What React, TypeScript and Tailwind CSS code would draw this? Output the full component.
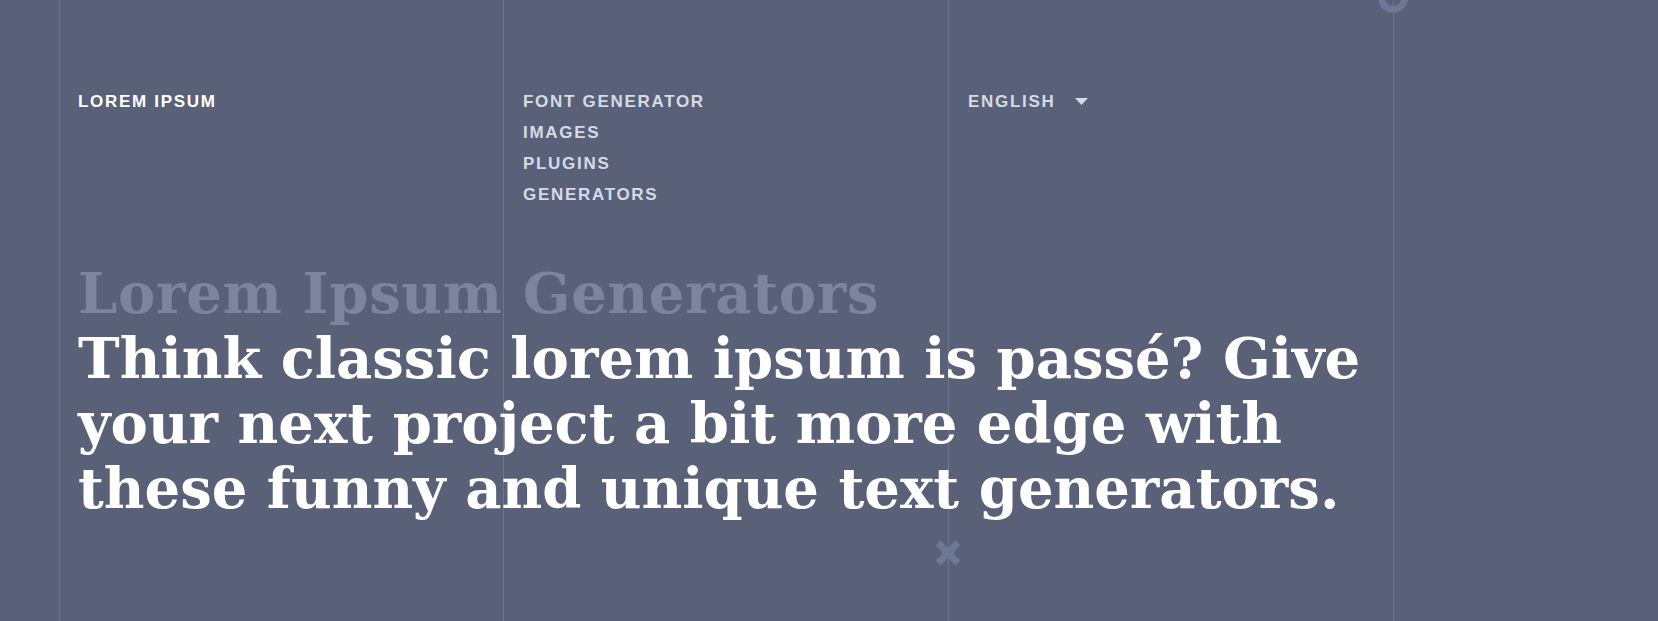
import { Fragment } from "react"

const navLinks = ["FONT GENERATOR", "IMAGES", "PLUGINS", "GENERATORS"]

const heroLines = [
  "Think classic lorem ipsum is passé? Give",
  "your next project a bit more edge with",
  "these funny and unique text generators.",
]

export default function App() {
  return (
    <div className="relative h-[621px] overflow-hidden bg-[#596178] font-['Liberation_Sans',Arial,sans-serif]">
      {/* grid lines in the background */}
      <div className="pointer-events-none absolute inset-0 flex pl-[59px]">
        <div className="w-[444px] border-l border-[#6c7591]" />
        <div className="w-[445px] border-l border-[#6c7591]" />
        <div className="w-[445px] border-l border-[#6c7591]" />
        <div className="flex-1 border-l border-[#6c7591]" />
      </div>

      {/* ring on the last line */}
      <div className="absolute left-[1378px] top-[-17px] h-[30px] w-[30px] rounded-full border-[7px] border-[#6e7896]" />

      {/* cross on the third line */}
      <svg className="absolute left-[934px] top-[539px]" width="28" height="28" viewBox="0 0 28 28">
        <path d="M4 4 L24 24 M24 4 L4 24" stroke="#6e7896" strokeWidth="7" />
      </svg>

      <div className="relative pl-[59px]">
        <header className="flex pt-[86px] text-[17px] font-bold leading-[31px] tracking-[1.7px]">
          <div className="w-[444px] pl-[19px] text-white">LOREM IPSUM</div>
          <nav className="w-[445px] pl-[20px] text-[#d6dae6]">
            {navLinks.map((link) => (
              <div key={link}>{link}</div>
            ))}
          </nav>
          <div className="w-[445px] pl-[20px] text-[#d6dae6]">
            <div className="flex items-center">
              <span>ENGLISH</span>
              <svg className="ml-[20px]" width="13" height="7" viewBox="0 0 13 7">
                <polygon points="0,0 13,0 6.5,7" fill="#d6dae6" />
              </svg>
            </div>
          </div>
        </header>

        <div className="mt-[51px] pl-[19px] font-['Georgia','DejaVu_Serif',serif] text-[56px] font-bold leading-[65px]">
          <h1 className="tracking-[0.65px] text-[#7d859d]">Lorem Ipsum Generators</h1>
          <p className="text-white">
            {heroLines.map((line, i) => (
              <Fragment key={i}>
                {line}
                {i < heroLines.length - 1 && <br />}
              </Fragment>
            ))}
          </p>
        </div>
      </div>
    </div>
  )
}
